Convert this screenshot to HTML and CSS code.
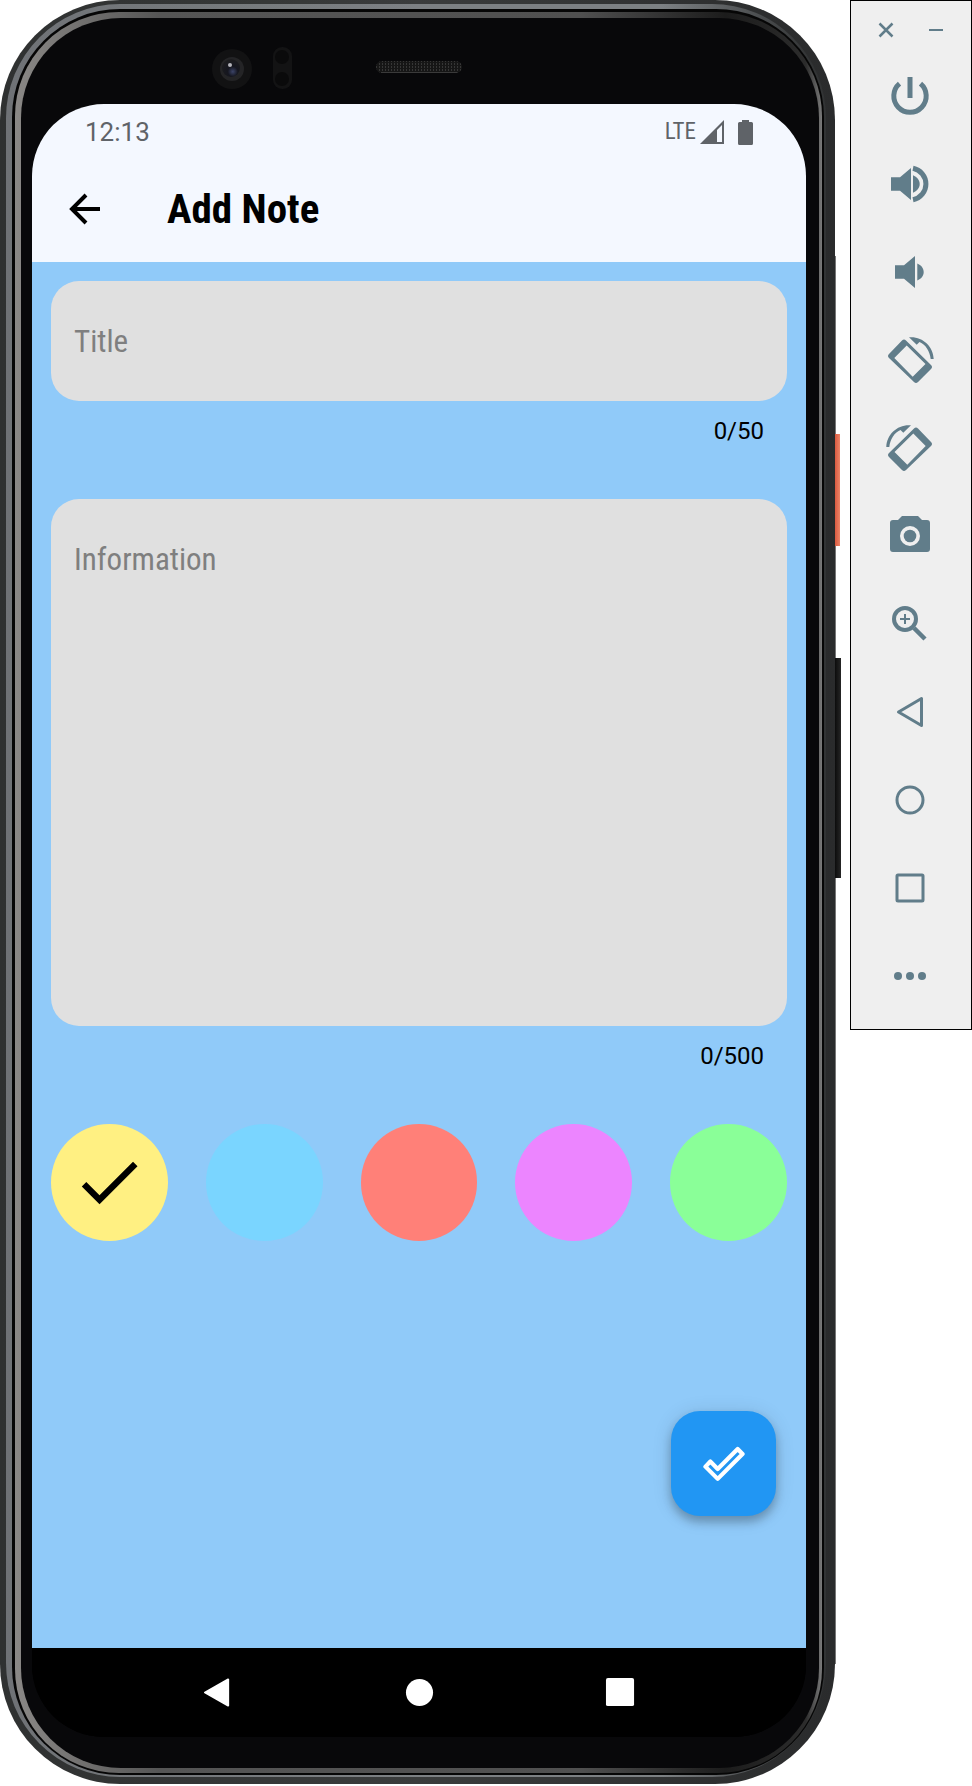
FILE: index.html
```html
<!DOCTYPE html>
<html lang="en">
<head>
<meta charset="utf-8">
<meta name="viewport" content="width=device-width, initial-scale=1">
<title>Add Note</title>
<link rel="stylesheet" href="styles.css">
</head>
<body>
<div class="emulator">
  <div class="phone">
    <span class="side-line"></span>
    <span class="side-key side-key-power"></span>
    <span class="side-key side-key-volume"></span>
    <div class="rim"><div class="groove"><div class="edge"><div class="glass">
      <svg class="sensors" viewBox="0 0 440 86" aria-hidden="true">
        <defs>
          <pattern id="mesh" width="3" height="3" patternUnits="userSpaceOnUse">
            <rect width="3" height="3" fill="#161616"/><rect width="1" height="2" fill="#363636"/>
          </pattern>
          <radialGradient id="lens" cx="0.6" cy="0.7" r="0.7">
            <stop offset="0" stop-color="#3c4468"/><stop offset="0.4" stop-color="#15161f"/><stop offset="1" stop-color="#1c1c1e"/>
          </radialGradient>
        </defs>
        <circle cx="33" cy="51" r="20" fill="#121213"/>
        <circle cx="33" cy="51" r="12" fill="#242426"/>
        <circle cx="32" cy="50" r="9" fill="url(#lens)"/>
        <circle cx="31" cy="47" r="2" fill="#b5b5bc"/>
        <rect x="74" y="29" width="19" height="42" rx="9" fill="#131314"/>
        <circle cx="83" cy="39" r="7" fill="#0a0a0b"/>
        <circle cx="83" cy="61" r="7" fill="#0a0a0b"/>
        <rect x="177" y="43" width="86" height="12" rx="6" fill="url(#mesh)"/>
        <path d="M182 54.500H258" stroke="#3a3a3a"/>
      </svg>
      <div class="screen">
        <header class="top">
          <div class="status">
            <time class="clock">12:13</time>
            <div class="status-icons">
              <span class="network">LTE</span>
              <svg class="signal" viewBox="0 0 24 24" aria-hidden="true"><path fill-rule="evenodd" d="M24 0V24H0zM22 5L17 10V22H22z"/></svg>
              <svg class="battery" viewBox="0 0 15 25" aria-hidden="true"><path d="M4 0H11V2H13.500Q15 2 15 3.500V23.500Q15 25 13.500 25H1.500Q0 25 0 23.500V3.500Q0 2 1.500 2H4z"/></svg>
            </div>
          </div>
          <div class="app-bar">
            <button class="back" type="button" aria-label="Back">
              <svg viewBox="0 0 32 32" aria-hidden="true"><path d="M31 16H4M17 2L3 16L17 30"/></svg>
            </button>
            <h1 class="heading">Add Note</h1>
          </div>
        </header>
        <form class="note-form">
          <input class="field" type="text" maxlength="50" placeholder="Title" aria-label="Title">
          <output class="counter">0/50</output>
          <textarea class="field field-area" maxlength="500" placeholder="Information" aria-label="Information"></textarea>
          <output class="counter">0/500</output>
          <div class="swatches" role="radiogroup" aria-label="Note colour">
            <label class="swatch yellow"><input type="radio" name="colour" aria-label="Yellow" checked><svg class="tick" viewBox="0 0 24 24" aria-hidden="true"><path d="M9 16.170L4.830 12l-1.420 1.410L9 19 21 7l-1.410-1.410z"/></svg></label>
            <label class="swatch blue"><input type="radio" name="colour" aria-label="Blue"></label>
            <label class="swatch red"><input type="radio" name="colour" aria-label="Red"></label>
            <label class="swatch violet"><input type="radio" name="colour" aria-label="Violet"></label>
            <label class="swatch green"><input type="radio" name="colour" aria-label="Green"></label>
          </div>
          <button class="save" type="button" aria-label="Save note">
            <svg viewBox="0 0 24 24" aria-hidden="true"><path d="M19.800 3.400L8.400 14.800L4.200 10.600L1.400 13.500L8.400 20.500L22.600 6.300z"/></svg>
          </button>
        </form>
        <nav class="system-nav" aria-label="System">
          <button type="button" aria-label="Back"><svg viewBox="0 0 32 32" aria-hidden="true"><path d="M26 2.500V29.500L2 16z" stroke="#fff" stroke-width="2" stroke-linejoin="round"/></svg></button>
          <button type="button" aria-label="Home"><svg viewBox="0 0 32 32" aria-hidden="true"><circle cx="16" cy="16" r="14"/></svg></button>
          <button type="button" aria-label="Overview"><svg viewBox="0 0 32 32" aria-hidden="true"><rect x="1" y="1" width="29" height="29" rx="2"/></svg></button>
        </nav>
      </div>
    </div></div></div></div>
  </div>

  <aside class="toolbar" aria-label="Emulator controls">
    <div class="window-row">
      <button type="button" aria-label="Close"><svg viewBox="-12 -12 24 24"><path class="line" stroke-width="2.500" d="M-6.500 -6.500L6.500 6.500M6.500 -6.500L-6.500 6.500"/></svg></button>
      <button type="button" aria-label="Minimise"><svg viewBox="-12 -12 24 24"><path class="line" stroke-width="2" d="M-7 0H7"/></svg></button>
    </div>
    <button class="tool" type="button" aria-label="Power"><svg viewBox="-24 -24 48 48"><path class="line" stroke-width="5" d="M-10.500 -12.300A16.200 16.200 0 1 0 10.500 -12.300M0 -19V2"/></svg></button>
    <button class="tool" type="button" aria-label="Volume up"><svg viewBox="-24 -24 48 48"><path d="M-19 -6.700H-10L1 -16V16L-10 6.700H-19zM3 -8.700C7 -7 9.700 -4 9.700 0S7 7 3 8.700z"/><path class="line" stroke-width="5" d="M3 -15.700A16 16 0 0 1 3 15.700"/></svg></button>
    <button class="tool" type="button" aria-label="Volume down"><svg viewBox="-24 -24 48 48"><path d="M-15 -6.700H-6L5 -16V16L-6 6.700H-15zM7.300 -8.500C11 -7 13.700 -4 13.700 0S11 7 7.300 8.500z"/></svg></button>
    <button class="tool" type="button" aria-label="Rotate left"><svg viewBox="-24 -24 48 48"><path fill-rule="evenodd" d="M-8 -19.500Q-6 -21.500 -4 -19.500L21 5Q23 7 21 9L8 22Q6 24 4 22L-21 -2Q-23 -4 -21 -6zM-3.300 -14.500L-15.700 -2L2.700 16.700L15.500 4z"/><path d="M-1 -22.700C12 -24 23.300 -14 23.700 -1H20.700C19.700 -9 16 -15 9.500 -18L6.700 -15.300z"/></svg></button>
    <button class="tool" type="button" aria-label="Rotate right"><svg viewBox="-24 -24 48 48"><g transform="scale(-1 1)"><path fill-rule="evenodd" d="M-8 -19.500Q-6 -21.500 -4 -19.500L21 5Q23 7 21 9L8 22Q6 24 4 22L-21 -2Q-23 -4 -21 -6zM-3.300 -14.500L-15.700 -2L2.700 16.700L15.500 4z"/><path d="M-1 -22.700C12 -24 23.300 -14 23.700 -1H20.700C19.700 -9 16 -15 9.500 -18L6.700 -15.300z"/></g></svg></button>
    <button class="tool" type="button" aria-label="Take screenshot"><svg viewBox="-24 -24 48 48"><path fill-rule="evenodd" d="M-17 -16H-12L-8 -20H8L12 -16H17Q20 -16 20 -13V13Q20 16 17 16H-17Q-20 16 -20 13V-13Q-20 -16 -17 -16zM0 -10A10 10 0 1 0 0 10A10 10 0 1 0 0 -10z"/><circle r="6.300"/></svg></button>
    <button class="tool" type="button" aria-label="Zoom"><svg viewBox="-24 -24 48 48"><circle class="line" cx="-5" cy="-5" r="11" stroke-width="4"/><path class="line" stroke-width="2" d="M-10 -5H0M-5 -10V0"/><path class="line" stroke-width="4.500" d="M4 4L15 15" /></svg></button>
    <button class="tool" type="button" aria-label="Back"><svg viewBox="-24 -24 48 48"><path class="line" stroke-width="3" stroke-linejoin="round" d="M11.500 -13.500V13.500L-11.500 0z"/></svg></button>
    <button class="tool" type="button" aria-label="Home"><svg viewBox="-24 -24 48 48"><circle class="line" r="13" stroke-width="3"/></svg></button>
    <button class="tool" type="button" aria-label="Overview"><svg viewBox="-24 -24 48 48"><rect class="line" x="-13" y="-13" width="26" height="26" rx="1" stroke-width="3"/></svg></button>
    <button class="tool" type="button" aria-label="More"><svg viewBox="-24 -24 48 48"><circle cx="-12" r="4"/><circle r="4"/><circle cx="12" r="4"/></svg></button>
  </aside>
</div>
</body>
</html>
```

FILE: styles.css
```css
* {
  box-sizing: border-box;
}

body {
  margin: 0;
  background: #fff;
  color: #000;
  font-family: "Roboto Condensed", Roboto, sans-serif;
}

button {
  display: flex;
  align-items: center;
  justify-content: center;
  margin: 0;
  padding: 0;
  border: 0;
  background: none;
  cursor: pointer;
}

svg {
  display: block;
  flex: none;
}

.emulator {
  display: flex;
  align-items: flex-start;
  gap: 15px;
  min-height: 100vh;
}

/* Device frame: each layer is one ring of the metal edge */
.phone {
  position: relative;
  display: flex;
  flex: 1;
  min-width: 0;
  min-height: calc(100vh - 2px);
  padding: 4px 9px 7px 6px;
  border-radius: 120px;
  background: linear-gradient(to right, #2f3131, #3a3c3c 50%, #2a2b2c);
}

.rim,
.groove,
.edge,
.glass,
.screen {
  display: flex;
  flex: 1;
  flex-direction: column;
  min-width: 0;
}

.rim {
  padding: 5px 2px 2px 6px;
  border-radius: 114px;
  background: linear-gradient(to right, #6f7276, #7c8083 50%, #7c8083 80%, #323435 98%);
}

.groove {
  padding: 3px 2px 2px 3px;
  border-radius: 108px;
  background: #060606;
}

.edge {
  padding: 6px 3px 5px 6px;
  border-radius: 104px;
  background: linear-gradient(to right, #8a8886 0, #555 18%, #505050 70%, #1c1c1c 88%, #2c2c2c 98%, #7a7a7a 100%);
}

.glass {
  padding: 0 13px 31px 11px;
  border-radius: 100px;
  background: #08080a;
}

.side-line,
.side-key {
  position: absolute;
  left: 100%;
}

.side-line {
  top: 256px;
  bottom: 120px;
  width: 1px;
  background: #777;
}

.side-key-power {
  top: 434px;
  width: 5px;
  height: 112px;
  background: linear-gradient(to right, #d9593f, #ee8468);
}

.side-key-volume {
  top: 658px;
  width: 6px;
  height: 220px;
  background: linear-gradient(to right, #0c0c0c, #262626);
}

.sensors {
  align-self: center;
  width: 440px;
  height: 86px;
}

.screen {
  overflow: hidden;
  border-radius: 72px;
  background: #000;
}

.top {
  background: #f4f8ff;
}

.status {
  display: flex;
  align-items: center;
  justify-content: space-between;
  height: 56px;
  padding: 0 53px;
  color: #5f6368;
}

.clock {
  font: 26px/32px Roboto, sans-serif;
}

.status-icons {
  display: flex;
  align-items: center;
  gap: 4px;
  fill: #5f6368;
}

.network {
  font-size: 23px;
  line-height: 32px;
}

.signal {
  width: 24px;
  height: 24px;
}

.battery {
  width: 15px;
  height: 25px;
  margin-left: 10px;
}

.app-bar {
  display: flex;
  align-items: center;
  gap: 66px;
  height: 102px;
  padding: 0 37px 4px;
}

.back {
  width: 32px;
  height: 32px;
}

.back svg {
  width: 32px;
  height: 32px;
  fill: none;
  stroke: #000;
  stroke-width: 4;
}

.heading {
  margin: 0;
  font-size: 41px;
  font-weight: 700;
  line-height: 48px;
}

.note-form {
  display: flex;
  flex: 1;
  flex-direction: column;
  padding: 19px 19px 132px;
  background: #90caf9;
}

.field {
  display: block;
  width: 100%;
  height: 120px;
  margin: 0;
  padding: 0 23px;
  border: 0;
  border-radius: 28px;
  outline: 0;
  background: #e0e0e0;
  color: #000;
  font: inherit;
  font-size: 31px;
  line-height: 36px;
}

.field::placeholder {
  color: #7f7f7f;
  opacity: 1;
}

.field-area {
  height: 527px;
  padding: 43px 23px;
  resize: none;
}

.counter {
  align-self: flex-end;
  height: 98px;
  padding: 16px 23px 0;
  font-family: Roboto, sans-serif;
  font-size: 24px;
  line-height: 28px;
}

.swatches {
  display: grid;
  grid-template-columns: repeat(5, 1fr);
  gap: 38px;
}

.swatch {
  display: grid;
  place-items: center;
  aspect-ratio: 1;
  border-radius: 50%;
  cursor: pointer;
}

.swatch input,
.tick {
  grid-area: 1 / 1;
}

.swatch input {
  width: 100%;
  height: 100%;
  margin: 0;
  appearance: none;
}

.tick {
  width: 76px;
  height: 76px;
}

.yellow { background: #fff082; }
.blue { background: #7ad5ff; }
.red { background: #ff8078; }
.violet { background: #ec85ff; }
.green { background: #8aff98; }

.save {
  align-self: flex-end;
  width: 105px;
  height: 105px;
  margin-top: auto;
  margin-right: 11px;
  border-radius: 29px;
  background: #2196f3;
  box-shadow: 0 6px 10px rgba(0, 0, 0, 0.24), 0 2px 20px rgba(0, 0, 0, 0.12);
}

.save svg {
  width: 42px;
  height: 42px;
  fill: none;
  stroke: #fff;
  stroke-width: 2.400;
  stroke-linejoin: round;
}

.system-nav {
  display: flex;
  justify-content: center;
  gap: 170px;
  height: 89px;
  background: #000;
}

.system-nav svg {
  width: 31px;
  height: 31px;
  fill: #fff;
}

.toolbar {
  display: flex;
  flex: none;
  flex-direction: column;
  width: 122px;
  padding-bottom: 9px;
  border: 1px solid #000;
  background: #efefef;
  fill: #617d8a;
}

.window-row {
  display: flex;
  justify-content: center;
  gap: 26px;
  height: 51px;
  padding-top: 7px;
}

.window-row svg {
  width: 24px;
  height: 24px;
}

.tool {
  height: 88px;
  padding-right: 2px;
}

.tool svg {
  width: 48px;
  height: 48px;
}

.line {
  fill: none;
  stroke: #617d8a;
}
```
